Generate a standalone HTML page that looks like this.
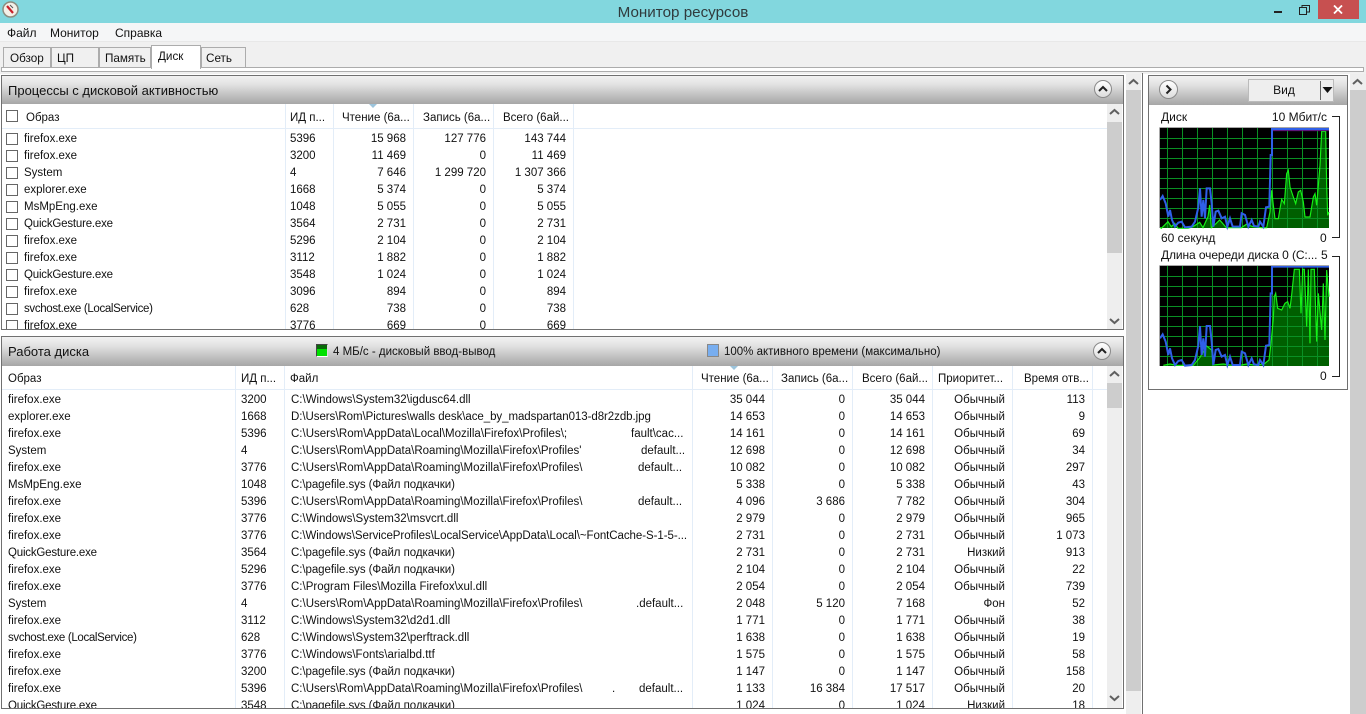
<!DOCTYPE html>
<html lang="ru"><head><meta charset="utf-8"><title>Монитор ресурсов</title>
<style>
html,body{margin:0;padding:0;width:1366px;height:714px;overflow:hidden;background:#fff}
body{position:relative;font:11.5px/17px "Liberation Sans","DejaVu Sans",sans-serif;color:#111}
.a{position:absolute;box-sizing:border-box;white-space:nowrap}
.hd{background:linear-gradient(#f2f2f2,#e2e2e2 30%,#a6a6a6);font-size:13px}
.tab{position:absolute;top:47px;height:20px;background:#f0f0f0;border:1px solid #acacac;border-bottom:0;box-sizing:border-box;font-size:11.7px;line-height:21px;padding-left:6px}
.round{position:absolute;width:18px;height:18px;border-radius:50%;border:1px solid #8a8a8a;background:linear-gradient(#fff,#ddd);box-sizing:border-box}
.round svg{position:absolute;left:3px;top:3px}
.sb{position:absolute;background:#eee}
.th{position:absolute;background:#cdcdcd}
table{border-collapse:collapse;table-layout:fixed;position:absolute;left:0;top:0}
td{padding:0;height:17px;line-height:17px;white-space:nowrap;overflow:hidden}
.r{text-align:right}
.sep{position:absolute;width:1px;background:#e3edf8}
.cb{display:block;width:10px;height:10px;border:1px solid #666;background:#fff;position:absolute;left:4px;top:2px}
.t1 td:first-child{position:relative}
.gp{position:absolute}
.p{letter-spacing:-.06px}
.s{letter-spacing:-.34px}
.q{letter-spacing:-.2px}
</style></head><body>

<div class="a" style="left:0;top:0;width:1366px;height:23px;background:#82d7de"></div>
<svg class="a" style="left:2px;top:1px" width="17" height="17" viewBox="0 0 17 17"><circle cx="8.5" cy="8.5" r="7.5" fill="#f4f0e8" stroke="#8d8d80" stroke-width="1.5"/><path d="M5 5l6 7" stroke="#c8202a" stroke-width="2.2"/><path d="M8 4l3 3" stroke="#555" stroke-width="1"/></svg>
<div class="a" style="left:0;top:2px;width:1366px;text-align:center;font-size:15.2px;line-height:21px;color:#303b3d">Монитор ресурсов</div>
<div class="a" style="left:1274px;top:11px;width:8px;height:2px;background:#222"></div>
<svg class="a" style="left:1299px;top:5px" width="11" height="10" viewBox="0 0 11 10"><path d="M.5 2.5h7v7h-7zM3 2.5V.5h7.500v6.500H7.500" fill="none" stroke="#222"/></svg>
<div class="a" style="left:1318px;top:0;width:41px;height:19px;background:#c75050"></div>
<svg class="a" style="left:1333px;top:5px" width="10" height="9" viewBox="0 0 10 9"><path d="M1 .5l8 8M9 .5l-8 8" stroke="#fff" stroke-width="1.800"/></svg>

<div class="a" style="left:0;top:23px;width:1366px;height:18px;background:#f5f6f7;font-size:12px;line-height:20px">
<span class="a" style="left:7px">Файл</span><span class="a" style="left:50px">Монитор</span><span class="a" style="left:115px">Справка</span></div>
<div class="a" style="left:0;top:41px;width:1366px;height:33px;background:#f0f0f0;border-top:1px solid #e8e8e8"></div>
<div class="a" style="left:1px;top:67px;width:1363px;height:5px;background:#fff;border:1px solid #acacac"></div>
<div class="tab" style="left:3px;width:48px">Обзор</div>
<div class="tab" style="left:51px;width:48px;padding-left:5px">ЦП</div>
<div class="tab" style="left:99px;width:52px;padding-left:5px">Память</div>
<div class="tab" style="left:151px;top:45px;width:50px;height:24px;background:#fff;line-height:22px">Диск</div>
<div class="tab" style="left:201px;width:45px;padding-left:4px">Сеть</div>

<!-- top panel -->
<div class="a" style="left:1px;top:75px;width:1123px;height:255px;border:1px solid #707070;background:#fff;overflow:hidden">
<div class="a hd" style="left:0;top:0;width:1122px;height:28px;padding-left:6px;line-height:29px">Процессы с дисковой активностью</div>
<div class="round" style="left:1092px;top:4px"><svg width="10" height="10" viewBox="0 0 10 10"><path d="M1 7l4-4 4 4" fill="none" stroke="#222" stroke-width="2"/></svg></div>
<div class="a" style="left:0;top:28px;width:1105px;height:25px;border-bottom:1px solid #e3edf8;line-height:28px">
<span class="cb" style="left:4px;top:6px;width:10px;height:10px"></span>
<span class="a" style="left:24px">Образ</span><span class="a" style="left:288px">ИД п...</span><span class="a" style="left:340px">Чтение (6а...</span><span class="a" style="left:421px">Запись (6а...</span><span class="a" style="left:501px">Всего (6ай...</span></div>
<svg class="a" style="left:367px;top:28px" width="8" height="5"><path d="M0 0h8L4 4z" fill="#9cc4dc"/></svg>
<div class="sep" style="left:283px;top:28px;height:226px"></div><div class="sep" style="left:331px;top:28px;height:226px"></div><div class="sep" style="left:411px;top:28px;height:226px"></div><div class="sep" style="left:491px;top:28px;height:226px"></div><div class="sep" style="left:571px;top:28px;height:226px"></div>
<div class="a" style="left:0;top:55px;width:1105px;height:198px;overflow:hidden">
<table class="t1" style="width:564px"><colgroup><col style="width:22px"><col style="width:266px"><col style="width:49px"><col style="width:67px"><col style="width:80px"><col style="width:80px"></colgroup>
<tr><td><i class="cb"></i></td><td>firefox.exe</td><td>5396</td><td class="r">15 968</td><td class="r">127 776</td><td class="r">143 744</td></tr>
<tr><td><i class="cb"></i></td><td>firefox.exe</td><td>3200</td><td class="r">11 469</td><td class="r">0</td><td class="r">11 469</td></tr>
<tr><td><i class="cb"></i></td><td>System</td><td>4</td><td class="r">7 646</td><td class="r">1 299 720</td><td class="r">1 307 366</td></tr>
<tr><td><i class="cb"></i></td><td>explorer.exe</td><td>1668</td><td class="r">5 374</td><td class="r">0</td><td class="r">5 374</td></tr>
<tr><td><i class="cb"></i></td><td>MsMpEng.exe</td><td>1048</td><td class="r">5 055</td><td class="r">0</td><td class="r">5 055</td></tr>
<tr><td><i class="cb"></i></td><td class="q">QuickGesture.exe</td><td>3564</td><td class="r">2 731</td><td class="r">0</td><td class="r">2 731</td></tr>
<tr><td><i class="cb"></i></td><td>firefox.exe</td><td>5296</td><td class="r">2 104</td><td class="r">0</td><td class="r">2 104</td></tr>
<tr><td><i class="cb"></i></td><td>firefox.exe</td><td>3112</td><td class="r">1 882</td><td class="r">0</td><td class="r">1 882</td></tr>
<tr><td><i class="cb"></i></td><td class="q">QuickGesture.exe</td><td>3548</td><td class="r">1 024</td><td class="r">0</td><td class="r">1 024</td></tr>
<tr><td><i class="cb"></i></td><td>firefox.exe</td><td>3096</td><td class="r">894</td><td class="r">0</td><td class="r">894</td></tr>
<tr><td><i class="cb"></i></td><td class="s">svchost.exe (LocalService)</td><td>628</td><td class="r">738</td><td class="r">0</td><td class="r">738</td></tr>
<tr><td><i class="cb"></i></td><td>firefox.exe</td><td>3776</td><td class="r">669</td><td class="r">0</td><td class="r">669</td></tr>
</table></div>
<div class="sb" style="left:1105px;top:28px;width:15px;height:225px"></div>
<div class="th" style="left:1105px;top:46px;width:15px;height:131px"></div>
<svg class="a" style="left:1107px;top:32px" width="11" height="8"><path d="M1 6l4.500-4 4.500 4" fill="none" stroke="#606060" stroke-width="2"/></svg>
<svg class="a" style="left:1107px;top:241px" width="11" height="8"><path d="M1 2l4.500 4 4.500-4" fill="none" stroke="#606060" stroke-width="2"/></svg>
</div>

<!-- bottom panel -->
<div class="a" style="left:1px;top:336px;width:1123px;height:373px;border:1px solid #707070;background:#fff;overflow:hidden">
<div class="a hd" style="left:0;top:0;width:1122px;height:29px;padding-left:6px;line-height:29px">Работа диска</div>
<div class="a" style="left:314px;top:7px;width:12px;height:13px;background:#00e000;border:1px solid #444;border-bottom-color:#fff;border-right-color:#ddd;background-image:linear-gradient(#0a6a0a 0 4px,#00e000 4px)"></div>
<span class="a" style="left:331px;top:7px;line-height:17px">4 МБ/с - дисковый ввод-вывод</span>
<div class="a" style="left:705px;top:7px;width:12px;height:13px;background:#78aef0;border:1px solid #888"></div>
<span class="a" style="left:722px;top:7px;line-height:17px">100% активного времени (максимально)</span>
<div class="round" style="left:1091px;top:5px"><svg width="10" height="10" viewBox="0 0 10 10"><path d="M1 7l4-4 4 4" fill="none" stroke="#222" stroke-width="2"/></svg></div>
<div class="a" style="left:0;top:29px;width:1105px;height:24px;border-bottom:1px solid #e3edf8;line-height:27px">
<span class="a" style="left:6px">Образ</span><span class="a" style="left:239px">ИД п...</span><span class="a" style="left:288px">Файл</span><span class="a" style="left:699px">Чтение (6а...</span><span class="a" style="left:779px">Запись (6а...</span><span class="a" style="left:860px">Всего (6ай...</span><span class="a" style="left:936px">Приоритет...</span><span class="a" style="left:1022px">Время отв...</span></div>
<svg class="a" style="left:728px;top:29px" width="8" height="5"><path d="M0 0h8L4 4z" fill="#9cc4dc"/></svg>
<div class="sep" style="left:233px;top:29px;height:342px"></div><div class="sep" style="left:282px;top:29px;height:342px"></div><div class="sep" style="left:690px;top:29px;height:342px"></div><div class="sep" style="left:770px;top:29px;height:342px"></div><div class="sep" style="left:850px;top:29px;height:342px"></div><div class="sep" style="left:930px;top:29px;height:342px"></div><div class="sep" style="left:1010px;top:29px;height:342px"></div><div class="sep" style="left:1090px;top:29px;height:342px"></div>
<div class="a" style="left:0;top:55px;width:1105px;height:316px;overflow:hidden">
<table style="width:1082px"><colgroup><col style="width:239px"><col style="width:50px"><col style="width:399px"><col style="width:75px"><col style="width:80px"><col style="width:80px"><col style="width:80px"><col style="width:80px"></colgroup>
<tr><td style="padding-left:6px">firefox.exe</td><td>3200</td><td>C:\Windows\System32\igdusc64.dll</td><td class="r">35 044</td><td class="r">0</td><td class="r">35 044</td><td class="r">Обычный</td><td class="r">113</td></tr>
<tr><td style="padding-left:6px">explorer.exe</td><td>1668</td><td class="p">D:\Users\Rom\Pictures\walls desk\ace_by_madspartan013-d8r2zdb.jpg</td><td class="r">14 653</td><td class="r">0</td><td class="r">14 653</td><td class="r">Обычный</td><td class="r">9</td></tr>
<tr><td style="padding-left:6px">firefox.exe</td><td>5396</td><td>C:\Users\Rom\AppData\Local\Mozilla\Firefox\Profiles\;<span class="gp" style="left:629px">fault\cac...</span></td><td class="r">14 161</td><td class="r">0</td><td class="r">14 161</td><td class="r">Обычный</td><td class="r">69</td></tr>
<tr><td style="padding-left:6px">System</td><td>4</td><td>C:\Users\Rom\AppData\Roaming\Mozilla\Firefox\Profiles'<span class="gp" style="left:639px">default...</span></td><td class="r">12 698</td><td class="r">0</td><td class="r">12 698</td><td class="r">Обычный</td><td class="r">34</td></tr>
<tr><td style="padding-left:6px">firefox.exe</td><td>3776</td><td>C:\Users\Rom\AppData\Roaming\Mozilla\Firefox\Profiles\<span class="gp" style="left:636px">default...</span></td><td class="r">10 082</td><td class="r">0</td><td class="r">10 082</td><td class="r">Обычный</td><td class="r">297</td></tr>
<tr><td style="padding-left:6px">MsMpEng.exe</td><td>1048</td><td class="p">C:\pagefile.sys (Файл подкачки)</td><td class="r">5 338</td><td class="r">0</td><td class="r">5 338</td><td class="r">Обычный</td><td class="r">43</td></tr>
<tr><td style="padding-left:6px">firefox.exe</td><td>5396</td><td>C:\Users\Rom\AppData\Roaming\Mozilla\Firefox\Profiles\<span class="gp" style="left:636px">default...</span></td><td class="r">4 096</td><td class="r">3 686</td><td class="r">7 782</td><td class="r">Обычный</td><td class="r">304</td></tr>
<tr><td style="padding-left:6px">firefox.exe</td><td>3776</td><td>C:\Windows\System32\msvcrt.dll</td><td class="r">2 979</td><td class="r">0</td><td class="r">2 979</td><td class="r">Обычный</td><td class="r">965</td></tr>
<tr><td style="padding-left:6px">firefox.exe</td><td>3776</td><td class="p">C:\Windows\ServiceProfiles\LocalService\AppData\Local\~FontCache-S-1-5-...</td><td class="r">2 731</td><td class="r">0</td><td class="r">2 731</td><td class="r">Обычный</td><td class="r">1 073</td></tr>
<tr><td style="padding-left:6px" class="q">QuickGesture.exe</td><td>3564</td><td class="p">C:\pagefile.sys (Файл подкачки)</td><td class="r">2 731</td><td class="r">0</td><td class="r">2 731</td><td class="r">Низкий</td><td class="r">913</td></tr>
<tr><td style="padding-left:6px">firefox.exe</td><td>5296</td><td class="p">C:\pagefile.sys (Файл подкачки)</td><td class="r">2 104</td><td class="r">0</td><td class="r">2 104</td><td class="r">Обычный</td><td class="r">22</td></tr>
<tr><td style="padding-left:6px">firefox.exe</td><td>3776</td><td>C:\Program Files\Mozilla Firefox\xul.dll</td><td class="r">2 054</td><td class="r">0</td><td class="r">2 054</td><td class="r">Обычный</td><td class="r">739</td></tr>
<tr><td style="padding-left:6px">System</td><td>4</td><td>C:\Users\Rom\AppData\Roaming\Mozilla\Firefox\Profiles\<span class="gp" style="left:634px">.default...</span></td><td class="r">2 048</td><td class="r">5 120</td><td class="r">7 168</td><td class="r">Фон</td><td class="r">52</td></tr>
<tr><td style="padding-left:6px">firefox.exe</td><td>3112</td><td>C:\Windows\System32\d2d1.dll</td><td class="r">1 771</td><td class="r">0</td><td class="r">1 771</td><td class="r">Обычный</td><td class="r">38</td></tr>
<tr><td style="padding-left:6px" class="s">svchost.exe (LocalService)</td><td>628</td><td>C:\Windows\System32\perftrack.dll</td><td class="r">1 638</td><td class="r">0</td><td class="r">1 638</td><td class="r">Обычный</td><td class="r">19</td></tr>
<tr><td style="padding-left:6px">firefox.exe</td><td>3776</td><td>C:\Windows\Fonts\arialbd.ttf</td><td class="r">1 575</td><td class="r">0</td><td class="r">1 575</td><td class="r">Обычный</td><td class="r">58</td></tr>
<tr><td style="padding-left:6px">firefox.exe</td><td>3200</td><td class="p">C:\pagefile.sys (Файл подкачки)</td><td class="r">1 147</td><td class="r">0</td><td class="r">1 147</td><td class="r">Обычный</td><td class="r">158</td></tr>
<tr><td style="padding-left:6px">firefox.exe</td><td>5396</td><td>C:\Users\Rom\AppData\Roaming\Mozilla\Firefox\Profiles\<span class="gp" style="left:610px">.</span><span class="gp" style="left:637px">default...</span></td><td class="r">1 133</td><td class="r">16 384</td><td class="r">17 517</td><td class="r">Обычный</td><td class="r">20</td></tr>
<tr><td style="padding-left:6px" class="q">QuickGesture.exe</td><td>3548</td><td class="p">C:\pagefile.sys (Файл подкачки)</td><td class="r">1 024</td><td class="r">0</td><td class="r">1 024</td><td class="r">Низкий</td><td class="r">18</td></tr>
</table></div>
<div class="sb" style="left:1105px;top:29px;width:15px;height:342px"></div>
<div class="th" style="left:1105px;top:46px;width:15px;height:25px"></div>
<svg class="a" style="left:1107px;top:33px" width="11" height="8"><path d="M1 6l4.500-4 4.500 4" fill="none" stroke="#606060" stroke-width="2"/></svg>
<svg class="a" style="left:1107px;top:357px" width="11" height="8"><path d="M1 2l4.500 4 4.500-4" fill="none" stroke="#606060" stroke-width="2"/></svg>
</div>

<!-- outer scrollbar -->
<div class="sb" style="left:1126px;top:74px;width:15px;height:640px"></div>
<div class="th" style="left:1126px;top:90px;width:15px;height:601px"></div>
<svg class="a" style="left:1128px;top:78px" width="11" height="8"><path d="M1 6l4.500-4 4.500 4" fill="none" stroke="#606060" stroke-width="2"/></svg>
<div class="a" style="left:1142px;top:73px;width:1px;height:641px;background:#707070"></div>

<!-- right panel -->
<div class="a" style="left:1148px;top:75px;width:200px;height:315px;border:1px solid #707070;background:#fff">
<div class="a hd" style="left:0;top:0;width:198px;height:29px"></div>
<div class="round" style="left:10px;top:4px;width:19px;height:19px"><svg width="11" height="11" viewBox="0 0 11 11"><path d="M3.500 1.500l4 4-4 4" fill="none" stroke="#222" stroke-width="2"/></svg></div>
<div class="a" style="left:99px;top:3px;width:86px;height:23px;background:#eee;border:1px solid #bbb;text-align:center;line-height:21px;padding-right:14px;font-size:12px">Вид</div>
<div class="a" style="left:171px;top:5px;width:1px;height:19px;background:#666"></div>
<svg class="a" style="left:172px;top:11px" width="13" height="7"><path d="M1.500 0h10l-5 6z" fill="#111"/></svg>
</div>
<div class="a" style="left:1161px;top:109px;font-size:12px">Диск</div>
<div class="a" style="right:39px;top:109px;font-size:12px">10 Мбит/с</div>
<div class="a" style="left:1161px;top:230px;font-size:12px">60 секунд</div>
<div class="a" style="left:1320px;top:230px;font-size:12px">0</div>
<div class="a" style="left:1161px;top:247px;font-size:12px;letter-spacing:-.1px">Длина очереди диска 0 (C:...</div>
<div class="a" style="left:1321px;top:247px;font-size:12px">5</div>
<div class="a" style="left:1320px;top:368px;font-size:12px">0</div>
<svg class="a" style="left:1330px;top:110px" width="12" height="280" viewBox="0 0 12 280"><path d="M2 6.500h7.500v121H2M2 146.500h7.500v120H2" fill="none" stroke="#222"/></svg>

<svg class="a" style="left:1150px;top:120px" width="190" height="140" viewBox="0 0 570 420">
<rect x="30" y="24" width="507" height="300" fill="#000"/>
<path d="M30 322L34 325 54 305 64 320 74 310 84 325 114 325 129 320 149 307 159 323 174 290 179 255 184 323 199 310 209 300 229 323 274 323 289 313 309 320 335 323 350 323 360 276 365 211 370 256 375 296 385 296 390 266 395 238 403 251 410 161 415 151 420 201 430 231 437 251 445 216 452 211 460 246 465 291 480 291 490 231 495 221 500 256 510 136 515 34 527 34 530 196 533 286 537 276V324H30z" fill="#005f00"/>
<path d="M52.500 24v300M97.500 24v300M142.500 24v300M187.500 24v300M232.500 24v300M277.500 24v300M322.500 24v300M367.500 24v300M412.500 24v300M457.500 24v300M502.500 24v300M30 55.500h507M30 85.500h507M30 115.500h507M30 145.500h507M30 175.500h507M30 205.500h507M30 235.500h507M30 265.500h507M30 295.500h507" stroke="#0a9024" stroke-width="3"/>
<path d="M30 322L34 325 54 305 64 320 74 310 84 325 114 325 129 320 149 307 159 323 174 290 179 255 184 323 199 310 209 300 229 323 274 323 289 313 309 320 335 323 350 323 360 276 365 211 370 256 375 296 385 296 390 266 395 238 403 251 410 161 415 151 420 201 430 231 437 251 445 216 452 211 460 246 465 291 480 291 490 231 495 221 500 256 510 136 515 34 527 34 530 196 533 286 537 276" fill="none" stroke="#16f016" stroke-width="3.500"/>
<path d="M366 32h171" stroke="#6a1a8a" stroke-width="3"/>
<path d="M30 240L38 228 47 250 55 290 60 270 66 300 75 320 85 308 95 305 105 322 125 320 135 305 145 262 150 205 155 290 160 240 165 295 170 205 180 205 185 250 190 320 197 275 205 272 215 295 225 290 232 320 240 295 248 320 270 320 275 280 285 285 295 320 305 300 312 318 325 320 330 305 340 320 348 262 358 260 362 105 366 105 366 27 537 27" fill="none" stroke="#2f5fe8" stroke-width="6"/>
<path d="M30 22.500h507M28.500 22v302" stroke="#a8a8a8" stroke-width="3"/>
</svg>

<svg class="a" style="left:1150px;top:250px" width="190" height="140" viewBox="0 0 570 420">
<rect x="30" y="48" width="507" height="300" fill="#000"/>
<path d="M40 346L60 342 80 346 130 346 150 322 170 288 185 300 190 345 220 342 240 345 270 346 290 342 320 346 345 340 357 330 363 280 370 205 373 140 377 130 383 175 395 180 405 160 413 155 420 175 425 135 433 58 448 58 453 190 458 58 463 58 470 230 475 58 480 280 483 58 493 58 500 275 505 130 515 240 520 100 525 270 530 60 537 140V348H40z" fill="#005f00"/>
<path d="M52.500 48v300M97.500 48v300M142.500 48v300M187.500 48v300M232.500 48v300M277.500 48v300M322.500 48v300M367.500 48v300M412.500 48v300M457.500 48v300M502.500 48v300M30 79.500h507M30 109.500h507M30 139.500h507M30 169.500h507M30 199.500h507M30 229.500h507M30 259.500h507M30 289.500h507M30 319.500h507" stroke="#0a9024" stroke-width="3"/>
<path d="M40 346L60 342 80 346 130 346 150 322 170 288 185 300 190 345 220 342 240 345 270 346 290 342 320 346 345 340 357 330 363 280 370 205 373 140 377 130 383 175 395 180 405 160 413 155 420 175 425 135 433 58 448 58 453 190 458 58 463 58 470 230 475 58 480 280 483 58 493 58 500 275 505 130 515 240 520 100 525 270 530 60 537 140" fill="none" stroke="#16f016" stroke-width="3.500"/>
<path d="M30 265L38 253 47 275 55 315 60 295 66 325 75 345 85 333 95 330 105 347 125 345 135 330 145 287 150 228 155 315 160 265 165 320 170 228 180 228 185 275 190 345 197 300 205 297 215 320 225 315 232 345 240 320 248 345 270 345 275 305 285 310 295 345 305 325 312 343 325 345 330 330 340 345 348 287 358 285 362 130 366 130 366 50 537 50" fill="none" stroke="#2f5fe8" stroke-width="6"/>
<path d="M30 46.500h507M28.500 46v302" stroke="#a8a8a8" stroke-width="3"/>
</svg>

<div class="sb" style="left:1350px;top:74px;width:16px;height:640px"></div>
<div class="th" style="left:1350px;top:90px;width:16px;height:624px"></div>
<svg class="a" style="left:1352px;top:78px" width="11" height="8"><path d="M1 6l4.500-4 4.500 4" fill="none" stroke="#606060" stroke-width="2"/></svg>
</body></html>
